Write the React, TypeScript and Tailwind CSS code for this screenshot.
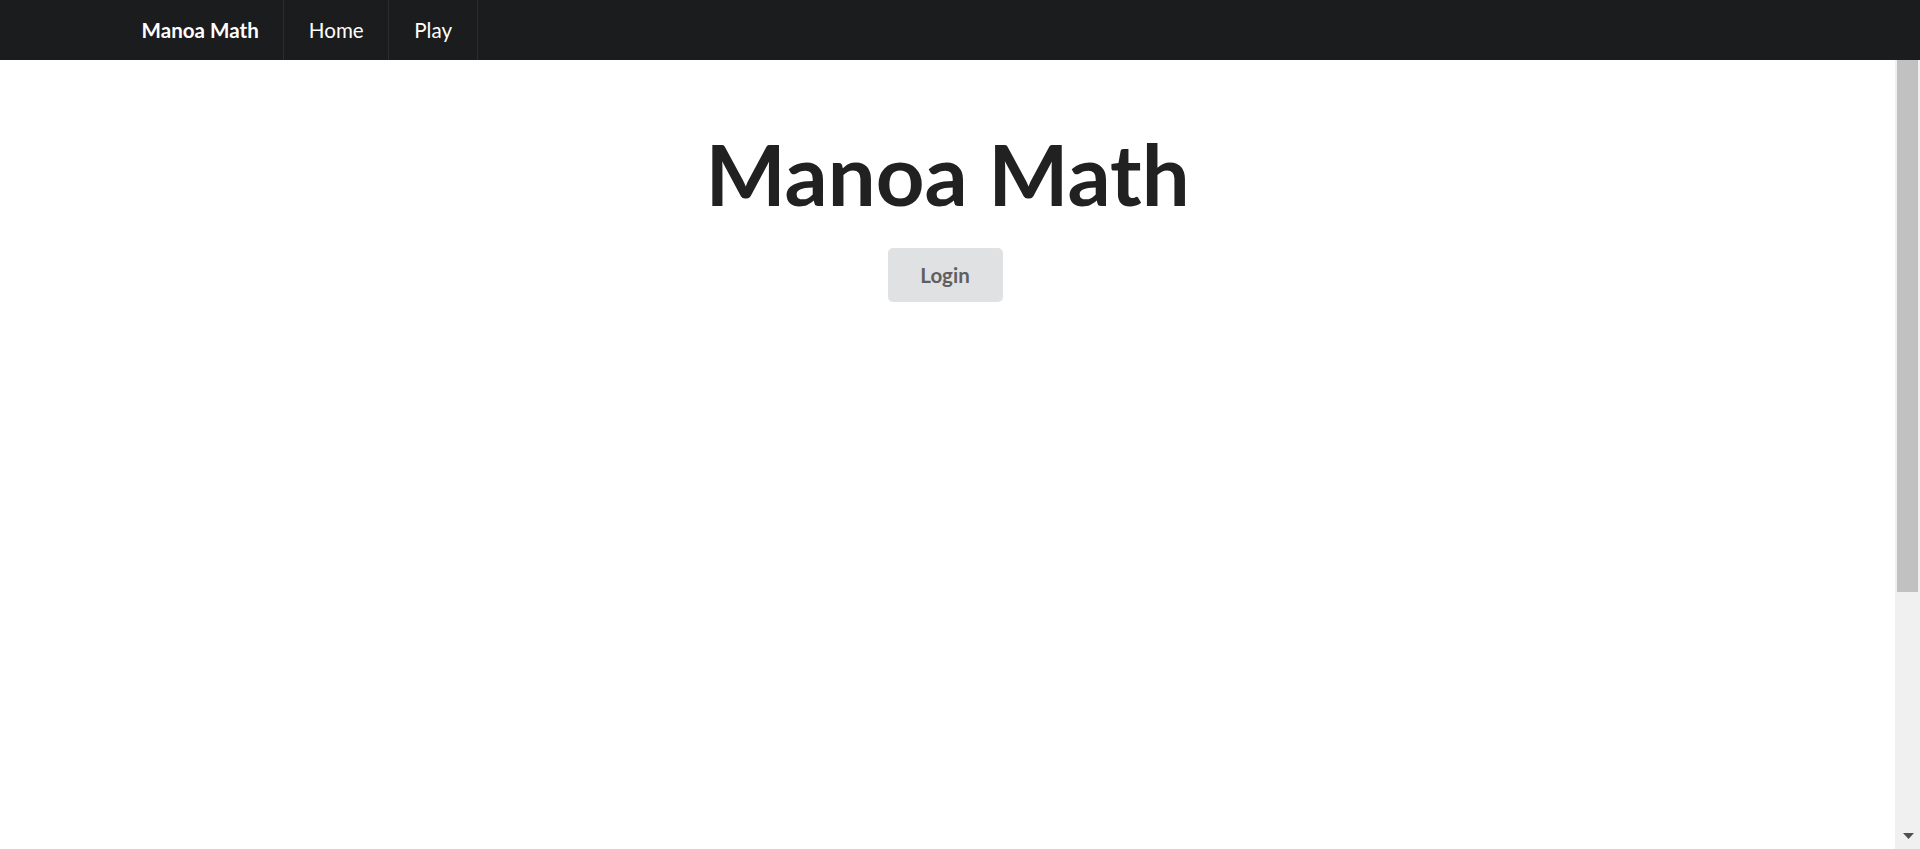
export default function App() {
	return (
		<div className="h-[849px] w-full flex flex-col overflow-hidden bg-white font-['Lato',sans-serif]">
			{/* Top menu */}
			<nav className="h-[60px] shrink-0 bg-[#1b1c1d] flex items-stretch pl-[117px] text-[20.6px] text-white">
				<a className="flex items-center px-[24.5px] font-bold border-r border-[#2c2d2e]">Manoa Math</a>
				<a className="flex items-center px-[24.5px] border-r border-[#2c2d2e]">Home</a>
				<a className="flex items-center px-[25px] border-r border-[#2c2d2e]">Play</a>
			</nav>

			<div className="flex-1 flex min-h-0">
				{/* Landing */}
				<main className="flex-1 flex flex-col items-center pt-[59px]">
					<h1 className="text-[85px] leading-[109px] font-bold text-[#212121]">Manoa Math</h1>
					<button className="mt-[20px] mr-[5px] w-[115px] h-[54px] rounded-[5px] bg-[#e0e1e2] text-[20.5px] font-bold text-[#5f5f5f]">
						Login
					</button>
				</main>

				{/* Scrollbar */}
				<div className="w-[25px] shrink-0 bg-[#f0f0f0] flex flex-col pl-[2px] pr-[2px]">
					<div className="h-[532px] bg-[#c1c1c1]" />
					<div className="flex-1" />
					<div className="h-[16px] flex justify-center items-start pl-[1px]">
						<svg width="11" height="6" viewBox="0 0 11 6">
							<path d="M0 0 H11 L5.5 6 Z" fill="#505050" />
						</svg>
					</div>
				</div>
			</div>
		</div>
	);
}
